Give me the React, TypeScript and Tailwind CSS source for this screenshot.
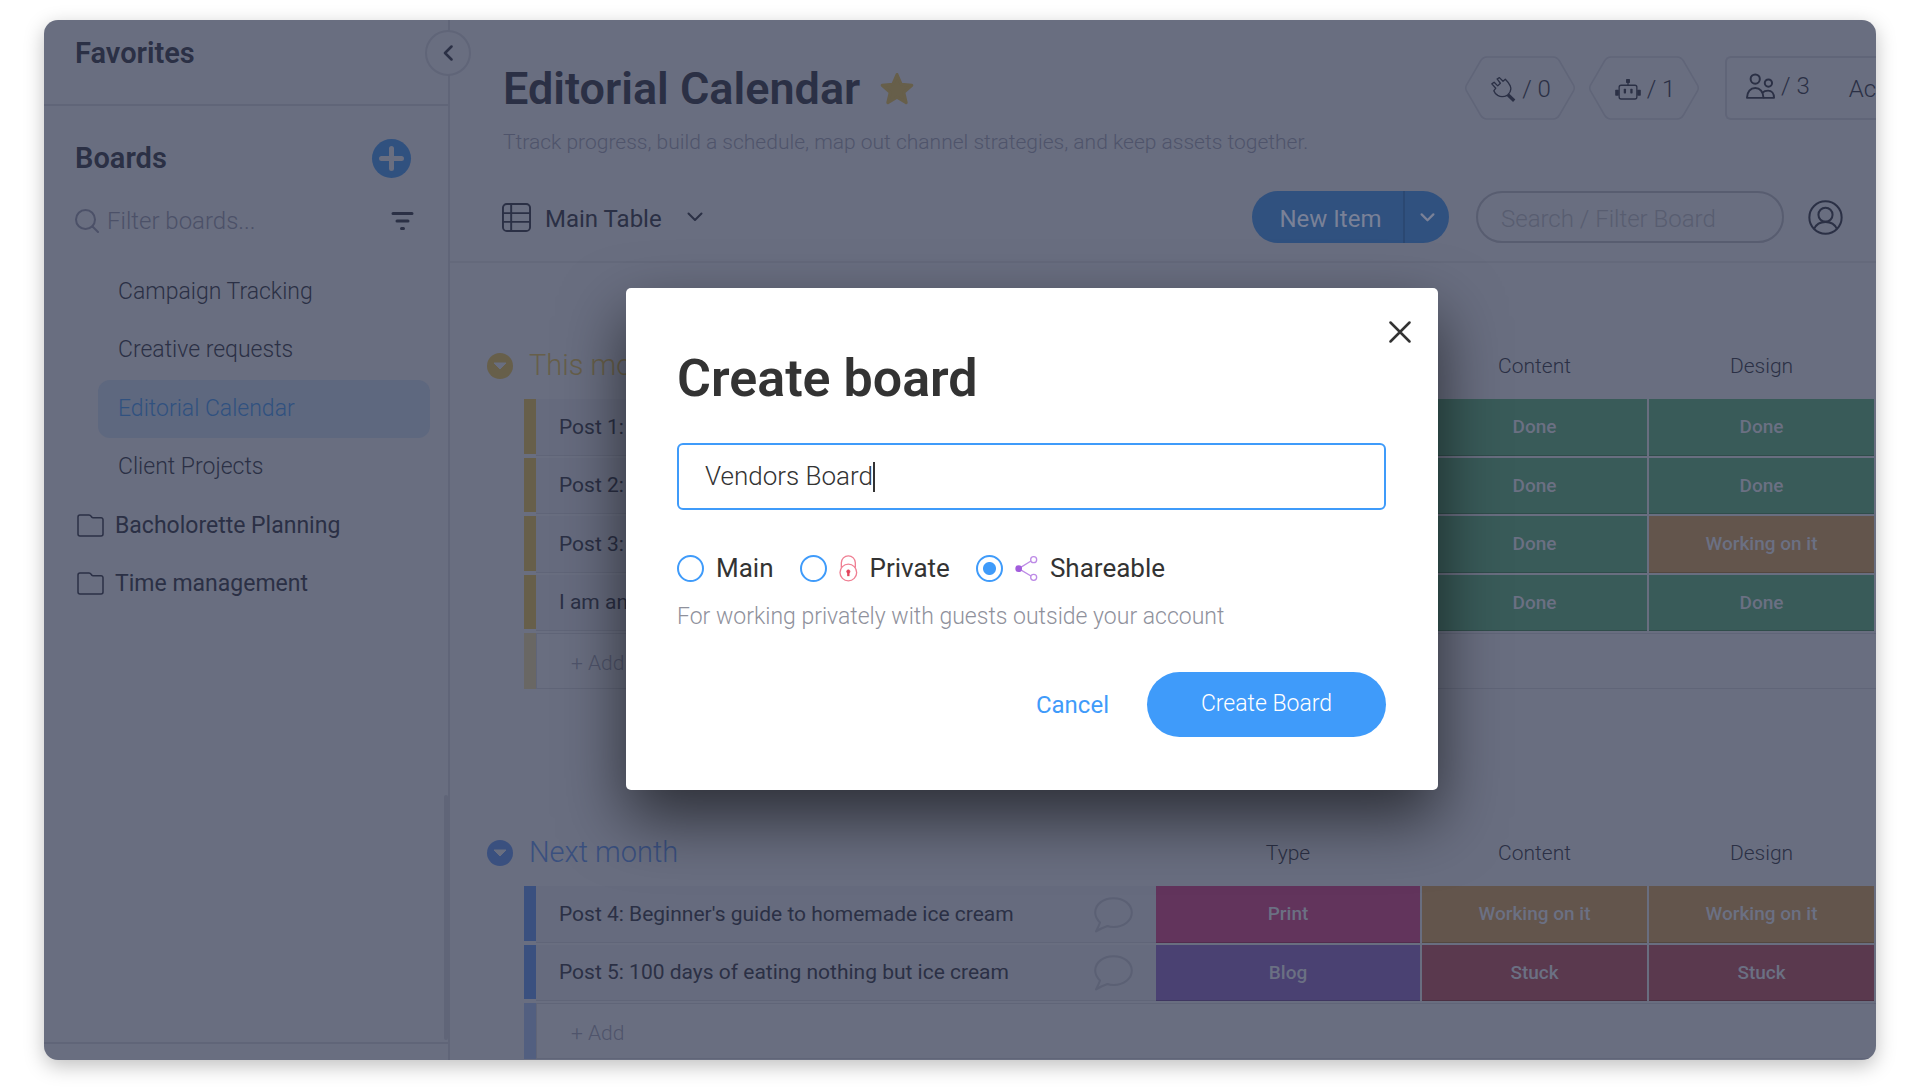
import React, { useState } from 'react';

type Status = 'Done' | 'Working on it' | 'Stuck' | 'Print' | 'Blog';

interface Item {
  name: string;
  type: Status;
  content: Status;
  design: Status;
}

interface GroupProps {
  title: string;
  items: Item[];
  titleClass: string;
  barClass: string;
  addBarClass: string;
}

const statusColors: Record<Status, string> = {
  Done: 'bg-[#395b59]',
  'Working on it': 'bg-[#63554c]',
  Stuck: 'bg-[#5a394e]',
  Print: 'bg-[#62345c]',
  Blog: 'bg-[#4a4172]',
};

const boards = ['Campaign Tracking', 'Creative requests', 'Editorial Calendar', 'Client Projects'];
const folders = ['Bacholorette Planning', 'Time management'];

const thisMonth: Item[] = [
  { name: 'Post 1:', type: 'Blog', content: 'Done', design: 'Done' },
  { name: 'Post 2:', type: 'Blog', content: 'Done', design: 'Done' },
  { name: 'Post 3:', type: 'Blog', content: 'Done', design: 'Working on it' },
  { name: 'I am an', type: 'Print', content: 'Done', design: 'Done' },
];

const nextMonth: Item[] = [
  { name: "Post 4: Beginner's guide to homemade ice cream", type: 'Print', content: 'Working on it', design: 'Working on it' },
  { name: 'Post 5: 100 days of eating nothing but ice cream', type: 'Blog', content: 'Stuck', design: 'Stuck' },
];

const ChevronIcon = ({ className }: { className: string }) => (
  <svg className={className} viewBox="0 0 16 10" fill="none" stroke="currentColor" strokeLinecap="round" strokeLinejoin="round">
    <path d="M1.5 1.5 8 8l6.500-6.500" />
  </svg>
);

const FolderIcon = () => (
  <svg className="h-[24px] w-[27px] shrink-0" viewBox="0 0 27 24" fill="none" stroke="currentColor" strokeWidth="1.500">
    <path d="M1 20V3a2 2 0 0 1 2-2h9c1 0 1.600.4 2 1.200.5 1 1 1.500 2 1.500h8a2 2 0 0 1 2 2V20a2 2 0 0 1-2 2H3a2 2 0 0 1-2-2Z" />
  </svg>
);

const PlugIcon = () => (
  <svg className="size-[25px]" viewBox="0 0 75 76" fill="none" stroke="currentColor" strokeWidth="4" strokeLinejoin="round">
    <path d="M8 42 14 34 2 21 9 16 20 27 28 19 18 6 25 2 36 13 43 7C50 14 55 20 58 27c4 10 1 20-8 28-9 5-22 6-30 1C14 52 10 48 8 42Z" />
    <path d="M51 54 70 72" strokeWidth="10" />
  </svg>
);

const RobotIcon = () => (
  <svg className="h-[21px] w-[26px]" viewBox="0 0 78 64" fill="none" stroke="currentColor" strokeWidth="4">
    <rect x="12" y="19" width="54" height="42" rx="6" />
    <path d="M39 8v11" />
    <g fill="currentColor" stroke="none">
      <rect x="33" y="0" width="12" height="12" rx="2" />
      <rect x="0" y="33" width="11" height="18" rx="2" />
      <rect x="67" y="33" width="11" height="18" rx="2" />
      <rect x="26" y="30" width="7" height="14" rx="2" />
      <rect x="46" y="30" width="7" height="14" rx="2" />
    </g>
  </svg>
);

const PeopleIcon = () => (
  <svg className="h-[26px] w-[29px]" viewBox="0 0 88 78" fill="none" stroke="currentColor" strokeWidth="6" strokeLinejoin="round">
    <circle cx="28" cy="18" r="14" />
    <circle cx="68" cy="30" r="11" />
    <path d="M3 75C3 56 14 45 28 45s25 11 25 30Z" />
    <path d="M50 59c4-4 10-6 17-6 11 0 18 9 18 22H53" />
  </svg>
);

const AvatarIcon = () => (
  <svg className="size-[35px]" viewBox="0 0 104 104" fill="none" stroke="currentColor" strokeWidth="6">
    <circle cx="52" cy="52" r="48" />
    <circle cx="52" cy="44" r="21" />
    <path d="M18 86c6-13 18-21 34-21s28 8 34 21" />
  </svg>
);

const ChatIcon = () => (
  <svg className="h-[36px] w-[39px]" viewBox="0 0 39 36" fill="none" stroke="currentColor" strokeWidth="2" strokeLinejoin="round">
    <path d="M6 25.500C3 22.500 1.200 19 1.200 15.500 1.200 7.500 9 1.200 19.500 1.200S37.800 7.500 37.800 15.500 30 30 19.500 30c-2.500 0-4.500-.3-6-1C9 30.500 5 32.500 2 34.500c1.500-3 3-6 4-9Z" />
  </svg>
);

const LockIcon = () => (
  <svg className="h-[27px] w-[19px] text-[#ef7f93]" viewBox="0 0 57 80" fill="none" stroke="currentColor" strokeWidth="4">
    <circle cx="28" cy="52" r="25" />
    <path d="M7 38V23a21 21 0 0 1 42 0v15" />
    <path d="M28 50v13" strokeWidth="7" className="text-[#e2445c]" />
    <circle cx="28" cy="49" r="5" className="fill-[#e2445c] stroke-[#e2445c]" strokeWidth="2" />
  </svg>
);

const ShareIcon = () => (
  <svg className="h-[25px] w-[23px] text-[#bd8ae6]" viewBox="0 0 69 75" fill="none" stroke="currentColor" strokeWidth="4">
    <path d="M11 38 48 15M11 38l37 22" />
    <circle cx="11" cy="38" r="10" className="fill-[#a25ddc] stroke-none" />
    <circle cx="56" cy="11" r="9" />
    <circle cx="56" cy="64" r="9" />
  </svg>
);

const HexButton = ({ label, children }: { label: string; children: React.ReactNode }) => (
  <button className="relative flex h-16 w-[110px] items-center justify-center gap-[6px] pt-[2px] pl-[2px] text-2xl font-light">
    <svg className="absolute inset-0 size-full text-[#606578]" viewBox="0 0 110 64" fill="none" stroke="currentColor" strokeWidth="1.500">
      <path d="M22 1h66c3 0 5 1.500 6.500 4l14 24c1 2 1 4 0 6l-14 24c-1.500 2.500-3.500 4-6.500 4H22c-3 0-5-1.500-6.500-4l-14-24c-1-2-1-4 0-6l14-24C17 2.500 19 1 22 1Z" />
    </svg>
    {children}
    <span>{label}</span>
  </button>
);

const Sidebar = () => (
  <aside className="relative flex w-[406px] shrink-0 flex-col border-r-2 border-[#606578]">
    <div className="h-[86px] border-b-2 border-[#606578] pt-4 pl-[31px]">
      <h2 className="text-[29px] leading-[34px] font-semibold">Favorites</h2>
    </div>
    <button
      aria-label="Collapse sidebar"
      className="absolute top-[10px] -right-[23px] z-10 flex size-[46px] items-center justify-center rounded-full border-2 border-[#606578] bg-[#696e80]"
    >
      <ChevronIcon className="h-[10px] w-[16px] rotate-90 stroke-[2.500]" />
    </button>

    <div className="mt-8 flex h-10 items-center justify-between pr-[37px] pl-[31px]">
      <h2 className="text-[29px] leading-[34px] font-semibold">Boards</h2>
      <button aria-label="Add board" className="flex size-[39px] items-center justify-center rounded-full bg-[#30517f] text-[#696e80]">
        <svg className="size-[25px]" viewBox="0 0 25 25" stroke="currentColor" strokeWidth="5" strokeLinecap="round">
          <path d="M12.500 2.500v20M2.500 12.500h20" />
        </svg>
      </button>
    </div>

    <div className="mt-[23px] flex h-10 items-center pr-[34px] pl-[31px] text-[#4c5168]">
      <svg className="size-6 shrink-0" viewBox="0 0 24 24" fill="none" stroke="currentColor" strokeWidth="2" strokeLinecap="round">
        <circle cx="10.500" cy="10.500" r="9.500" />
        <path d="m17.500 17.500 5.500 5.500" />
      </svg>
      <input
        type="text"
        aria-label="Filter boards"
        placeholder="Filter boards..."
        className="ml-2 min-w-0 flex-1 bg-transparent text-2xl font-light outline-none placeholder:text-[#4c5168]"
      />
      <button aria-label="Filter options" className="text-[#2b3045]">
        <svg className="h-[18px] w-[23px]" viewBox="0 0 23 18" stroke="currentColor" strokeWidth="3" strokeLinecap="round">
          <path d="M2 1.500h19M6 9h11M10.500 16.500h2" />
        </svg>
      </button>
    </div>

    <nav className="mt-[22px] pr-[18px] text-[23px]">
      <ul className="pl-[54px] font-light">
        {boards.map((board) => (
          <li key={board}>
            <a
              href="#"
              className={`flex h-[58px] items-center rounded-xl pl-5 ${
                board === 'Editorial Calendar' ? 'mt-px bg-[#5e687f] text-[#30517f]' : ''
              }`}
            >
              {board}
            </a>
          </li>
        ))}
      </ul>
      <ul className="mt-px pl-[33px]">
        {folders.map((folder) => (
          <li key={folder}>
            <a href="#" className="flex h-[58px] items-center gap-[11px]">
              <FolderIcon />
              {folder}
            </a>
          </li>
        ))}
      </ul>
    </nav>

    <div className="flex flex-1 items-end justify-end pb-[2px]">
      <div className="h-[245px] w-1 rounded-sm bg-[#606578]" />
    </div>
    <div className="h-[18px] border-t-2 border-[#606578]" />
  </aside>
);

const BoardHeader = () => (
  <header className="border-b-2 border-[#64697b] pt-9 pb-[18px] pl-[52px]">
    <div className="flex h-16 items-center">
      <h1 className="pt-px pl-px text-[45px] leading-[54px] font-semibold whitespace-nowrap">Editorial Calendar</h1>
      <svg className="mt-[2px] ml-5 size-[34px] text-[#675f4a]" viewBox="0 0 34 34" fill="currentColor" stroke="currentColor" strokeWidth="3" strokeLinejoin="round">
        <path d="m17 2.500 4.200 9.800 10.600 1-8 7 2.400 10.400L17 25.200l-9.200 5.500 2.400-10.400-8-7 10.600-1Z" />
      </svg>
      <div className="ml-auto flex items-center">
        <HexButton label="/ 0">
          <PlugIcon />
        </HexButton>
        <div className="ml-[14px]">
          <HexButton label="/ 1">
            <RobotIcon />
          </HexButton>
        </div>
        <div className="ml-[26px] flex h-16 w-[151px] items-center overflow-hidden rounded-l-md border-2 border-r-0 border-[#606578] pl-[19px] text-2xl font-light">
          <button className="flex items-center gap-[6px] pb-1">
            <PeopleIcon />
            <span>/ 3</span>
          </button>
          <button className="ml-auto pt-[2px]">Ac</button>
        </div>
      </div>
    </div>
    <p className="mt-2 pl-px text-[21px] leading-7 font-light whitespace-nowrap text-[#4f546b]">
      Ttrack progress, build a schedule, map out channel strategies, and keep assets together.
    </p>

    <div className="mt-[35px] flex h-[52px] items-center pr-[33px] text-2xl">
      <button className="flex items-center">
        <svg className="size-[29px]" viewBox="0 0 30 30" fill="none" stroke="currentColor" strokeWidth="2">
          <rect x="1" y="1" width="28" height="28" rx="4" />
          <path d="M9.500 1v28M1 10.500h28M1 19.500h28" />
        </svg>
        <span className="ml-[14px] pt-1">Main Table</span>
        <ChevronIcon className="ml-[25px] h-[10px] w-[16px] stroke-2" />
      </button>
      <div className="ml-auto flex h-full w-[197px] overflow-hidden rounded-full bg-[#30517f] text-[#7a8197]">
        <button className="flex-1 border-r-2 border-[#2b4872] pt-1 pl-[6px]">New Item</button>
        <button aria-label="More item options" className="flex w-11 items-center justify-center">
          <ChevronIcon className="h-[9px] w-[15px] stroke-[2.500]" />
        </button>
      </div>
      <input
        type="search"
        aria-label="Search / Filter Board"
        placeholder="Search / Filter Board"
        className="ml-[27px] h-full w-[308px] rounded-full border-2 border-[#585d70] bg-transparent px-[23px] pt-1 font-light outline-none placeholder:text-[#585d70]"
      />
      <button aria-label="Profile" className="ml-6">
        <AvatarIcon />
      </button>
    </div>
  </header>
);

const StatusCell = ({ status }: { status: Status }) => (
  <td
    className={`border-r-2 border-b-2 border-[#696e80] text-center text-[19px] font-medium text-[#6b7083] shadow-[inset_0_-1px_rgba(0,0,0,0.15)] ${statusColors[status]}`}
  >
    {status}
  </td>
);

const Group = ({ title, items, titleClass, barClass, addBarClass }: GroupProps) => (
  <table className="w-full table-fixed border-separate border-spacing-0 text-[21px]">
    <colgroup>
      <col className="w-[37px]" />
      <col className="w-3" />
      <col />
      <col className="w-[266px]" />
      <col className="w-[227px]" />
      <col className="w-[227px]" />
    </colgroup>
    <thead>
      <tr className="h-[66px]">
        <th colSpan={3} className={`text-left text-[29px] font-light ${titleClass}`}>
          <button className="flex items-center gap-4">
            <svg className="size-[26px]" viewBox="0 0 26 26">
              <circle cx="13" cy="13" r="13" fill="currentColor" />
              <path d="M7 10h12l-6 6Z" className="fill-[#696e80] stroke-[#696e80]" strokeLinejoin="round" />
            </svg>
            <span>{title}</span>
          </button>
        </th>
        <th className="pt-[2px] pr-[2px] font-light">Type</th>
        <th className="pt-[2px] pr-[2px] font-light">Content</th>
        <th className="pt-[2px] pr-[2px] font-light">Design</th>
      </tr>
    </thead>
    <tbody>
      {items.map((item) => (
        <tr key={item.name} className="h-[58px] odd:h-[59px]">
          <td />
          <td className={`border-b-4 border-[#696e80] ${barClass}`} />
          <td className="border-b-2 border-[#696e80] bg-[#666b7e] pr-[23px] pl-[23px] shadow-[inset_0_-1px_#606578]">
            <div className="flex items-center justify-between">
              <span className="whitespace-nowrap">{item.name}</span>
              <button aria-label="Open conversation" className="text-[#5b6074]">
                <ChatIcon />
              </button>
            </div>
          </td>
          <StatusCell status={item.type} />
          <StatusCell status={item.content} />
          <StatusCell status={item.design} />
        </tr>
      ))}
      <tr className="h-14">
        <td />
        <td className={addBarClass} />
        <td colSpan={4} className="border border-r-0 border-[#606578] pt-[5px] pl-[34px]">
          <button className="font-light text-[#4f546b]">+ Add</button>
        </td>
      </tr>
    </tbody>
  </table>
);

interface PrivacyOptionProps {
  label: string;
  value: string;
  setValue: (value: string) => void;
  icon?: React.ReactNode;
}

const PrivacyOption = ({ label, value, setValue, icon }: PrivacyOptionProps) => (
  <label className="flex items-center gap-3">
    <input
      type="radio"
      name="privacy"
      checked={value === label}
      onChange={() => setValue(label)}
      className="size-[27px] appearance-none rounded-full border-2 border-[#3f9bfa] bg-white checked:bg-[radial-gradient(circle,#3f9bfa_6px,white_7px)]"
    />
    {icon}
    <span>{label}</span>
  </label>
);

const CreateBoardModal = () => {
  const [name, setName] = useState('Vendors Board');
  const [privacy, setPrivacy] = useState('Shareable');

  return (
    <div className="absolute inset-0 z-20 flex items-start justify-center pt-[268px] pl-[144px]">
      <form
        role="dialog"
        aria-labelledby="create-board-title"
        className="relative w-[812px] rounded-[5px] bg-white pt-[61px] pr-[52px] pb-[53px] pl-[51px] text-[#333333] shadow-[0_28px_64px_rgba(0,0,0,0.58)]"
      >
        <button type="button" aria-label="Close" className="absolute top-[33px] right-[27px]">
          <svg className="size-[22px]" viewBox="0 0 22 22" stroke="currentColor" strokeWidth="2.500" strokeLinecap="round">
            <path d="M1.500 1.500l19 19M20.500 1.500l-19 19" />
          </svg>
        </button>
        <h2 id="create-board-title" className="text-[52px] leading-[60px] font-semibold">
          Create board
        </h2>
        <div className="mt-[34px] flex h-[67px] items-center rounded-md border-2 border-[#3f9bfa] pl-[26px]">
          <input
            type="text"
            aria-label="Board name"
            value={name}
            onChange={(e) => setName(e.target.value)}
            className="field-sizing-content bg-transparent text-[26px] font-light caret-transparent outline-none"
          />
          <span className="h-[30px] w-[2px] bg-[#333333]" />
        </div>
        <div className="mt-[38px] flex h-10 items-center gap-[26px] text-[26px]">
          <PrivacyOption label="Main" value={privacy} setValue={setPrivacy} />
          <PrivacyOption label="Private" value={privacy} setValue={setPrivacy} icon={<LockIcon />} />
          <PrivacyOption label="Shareable" value={privacy} setValue={setPrivacy} icon={<ShareIcon />} />
        </div>
        <p className="mt-[15px] text-[23px] leading-7 font-light text-[#8f919c]">
          For working privately with guests outside your account
        </p>
        <div className="mt-[41px] flex items-center justify-end gap-[38px]">
          <button type="button" className="text-2xl text-[#3f9bfa]">
            Cancel
          </button>
          <button type="submit" className="h-[65px] w-[239px] rounded-full bg-[#3f9bfa] text-[23px] font-light text-white">
            Create Board
          </button>
        </div>
      </form>
    </div>
  );
};

export default function App() {
  return (
    <div className="h-screen bg-white px-11 pt-5 pb-8 font-['Roboto',sans-serif] text-[#2b3045]">
      <div className="relative flex h-full overflow-hidden rounded-[14px] bg-[#696e80] shadow-[0_6px_20px_rgba(0,0,0,0.25)]">
        <Sidebar />
        <main className="min-w-0 flex-1">
          <BoardHeader />
          <div className="flex flex-col gap-[131px] pt-[70px] pl-[37px]">
            <Group
              title="This month"
              items={thisMonth}
              titleClass="text-[#675f4a]"
              barClass="bg-[#675f4a]"
              addBarClass="bg-[#696764]"
            />
            <Group
              title="Next month"
              items={nextMonth}
              titleClass="text-[#3a507f]"
              barClass="bg-[#3a507f]"
              addBarClass="bg-[#525f80]"
            />
          </div>
        </main>
        <CreateBoardModal />
      </div>
    </div>
  );
}
